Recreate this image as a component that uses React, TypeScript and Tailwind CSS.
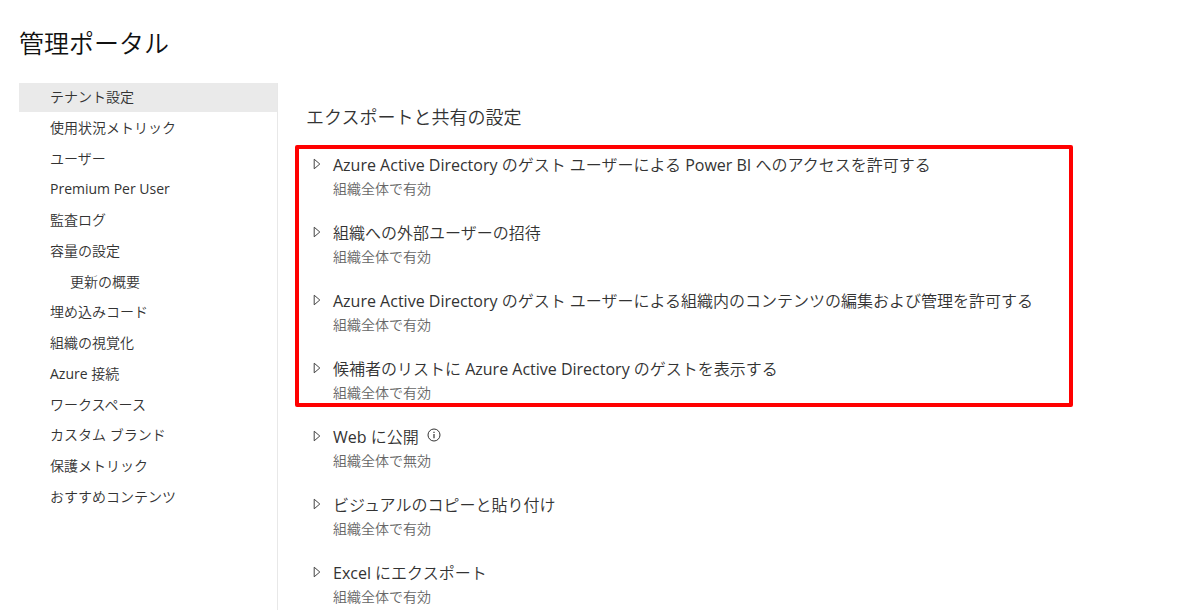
type NavItem = { label: string; indent?: boolean; active?: boolean };
type Setting = { title: string; status: string; info?: boolean };

const navItems: NavItem[] = [
  { label: "テナント設定", active: true },
  { label: "使用状況メトリック" },
  { label: "ユーザー" },
  { label: "Premium Per User" },
  { label: "監査ログ" },
  { label: "容量の設定" },
  { label: "更新の概要", indent: true },
  { label: "埋め込みコード" },
  { label: "組織の視覚化" },
  { label: "Azure 接続" },
  { label: "ワークスペース" },
  { label: "カスタム ブランド" },
  { label: "保護メトリック" },
  { label: "おすすめコンテンツ" },
];

const guestSettings: Setting[] = [
  { title: "Azure Active Directory のゲスト ユーザーによる Power BI へのアクセスを許可する", status: "組織全体で有効" },
  { title: "組織への外部ユーザーの招待", status: "組織全体で有効" },
  { title: "Azure Active Directory のゲスト ユーザーによる組織内のコンテンツの編集および管理を許可する", status: "組織全体で有効" },
  { title: "候補者のリストに Azure Active Directory のゲストを表示する", status: "組織全体で有効" },
];

const otherSettings: Setting[] = [
  { title: "Web に公開", status: "組織全体で無効", info: true },
  { title: "ビジュアルのコピーと貼り付け", status: "組織全体で有効" },
  { title: "Excel にエクスポート", status: "組織全体で有効" },
];

function InfoIcon() {
  return (
    <svg className="-mt-1 ml-2 size-3.5" viewBox="0 0 14 14" fill="none" stroke="#333" aria-hidden="true">
      <circle cx="7" cy="7" r="6" />
      <path d="M7 6v4.2M7 3.7v1.3" strokeWidth="1.2" />
    </svg>
  );
}

function SettingRow({ setting }: { setting: Setting }) {
  return (
    <li className="h-[68px]">
      <button type="button" className="flex items-start text-left">
        <svg className="mt-[5px] mr-3 h-3 w-2 shrink-0" viewBox="0 0 8 12" fill="none" stroke="#444" aria-hidden="true">
          <path d="M1.2 1.2v9.6L6.8 6z" />
        </svg>
        <span>
          <span className="flex h-6 items-center text-[16px] leading-6 whitespace-nowrap text-[#333]">
            {setting.title}
            {setting.info && <InfoIcon />}
          </span>
          <span className="block text-[14px] leading-6 text-[#666]">{setting.status}</span>
        </span>
      </button>
    </li>
  );
}

export default function App() {
  return (
    <div className="flex h-screen flex-col overflow-hidden bg-white pl-[19px] font-['Open_Sans','Noto_Sans_CJK_JP_DemiLight','Noto_Sans_CJK_JP',sans-serif] text-[#333]">
      <h1 className="h-[83px] shrink-0 pt-[25px] text-[25px] leading-9 text-[#111]">管理ポータル</h1>
      <div className="flex min-h-0 flex-1">
        <nav className="w-[259px] shrink-0 border-r border-[#e8e8e8]">
          <ul className="flex h-[429px] flex-col justify-between">
            {navItems.map((item) => (
              <li key={item.label}>
                <a
                  href="#"
                  aria-current={item.active ? "page" : undefined}
                  className={`block h-[29px] text-[14px] leading-7 ${item.indent ? "pl-[51px]" : "pl-[31px]"} ${item.active ? "bg-[#eaeaea]" : ""}`}
                >
                  {item.label}
                </a>
              </li>
            ))}
          </ul>
        </nav>
        <main className="min-w-0 flex-1 pt-5">
          <h2 className="ml-7 text-[18px] leading-7">エクスポートと共有の設定</h2>
          <ul className="mt-3.5 mr-[120px] ml-[17px] h-[262px] rounded-xs border-4 border-[#ff0000] pt-1 pl-3.5">
            {guestSettings.map((s) => (
              <SettingRow key={s.title} setting={s} />
            ))}
          </ul>
          <ul className="mt-[18px] pl-[35px]">
            {otherSettings.map((s) => (
              <SettingRow key={s.title} setting={s} />
            ))}
          </ul>
        </main>
      </div>
    </div>
  );
}
